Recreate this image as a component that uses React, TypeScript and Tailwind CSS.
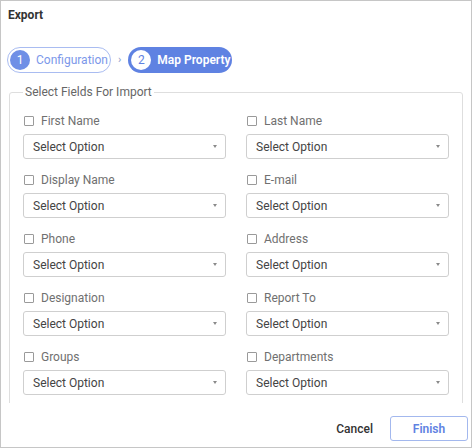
import { useState } from "react";

type Field = { key: string; label: string };

const FIELDS: Field[] = [
  { key: "firstName", label: "First Name" },
  { key: "lastName", label: "Last Name" },
  { key: "displayName", label: "Display Name" },
  { key: "email", label: "E-mail" },
  { key: "phone", label: "Phone" },
  { key: "address", label: "Address" },
  { key: "designation", label: "Designation" },
  { key: "reportTo", label: "Report To" },
  { key: "groups", label: "Groups" },
  { key: "departments", label: "Departments" },
];

function FieldRow({ field, checked, onToggle }: { field: Field; checked: boolean; onToggle: () => void }) {
  return (
    <div className="flex flex-col">
      <label className="flex items-center h-[16px] pl-[1px] cursor-pointer" onClick={onToggle}>
        <span
          className={
            "w-[10px] h-[10px] border rounded-[1px] " +
            (checked ? "border-[#5f82e2] bg-[#5f82e2]" : "border-[#9a9a9a] bg-white")
          }
        />
        <span className="ml-[7px] text-[12px] text-[#707070]">{field.label}</span>
      </label>
      <button
        type="button"
        className="mt-[5px] h-[25px] w-full flex items-center justify-between rounded-[3px] border border-[#cfcfcf] bg-white pl-[9px] pr-[8px] text-left"
      >
        <span className="text-[12px] font-normal text-[#444]">Select Option</span>
        <span className="w-0 h-0 border-l-[2.5px] border-r-[2.5px] border-t-[3px] border-l-transparent border-r-transparent border-t-[#8a8a8a]" />
      </button>
    </div>
  );
}

export default function App() {
  const [checked, setChecked] = useState<Record<string, boolean>>({});

  return (
    <div
      className="w-[472px] h-[448px] bg-white border border-[#c6c6c6] flex flex-col text-[12px]"
      style={{ fontFamily: "Roboto, 'Liberation Sans', sans-serif" }}
    >
      <div className="pl-[7px] pt-[6px] h-[16px] box-content leading-[16px] font-bold text-[12px] text-[#333]">Export</div>

      <div className="flex items-center mt-[24px] pl-[6px] h-[26px]">
        <div className="flex items-center h-[26px] w-[104px] rounded-full border border-[#a9bcf1] bg-white pl-[2px]">
          <span className="w-[20px] h-[20px] rounded-full bg-[#6f8fe6] text-white flex items-center justify-center text-[12px]">1</span>
          <span className="ml-[6px] text-[12px] text-[#7c98ea]">Configuration</span>
        </div>
        <span className="mx-[7px] text-[11px] text-[#8a9bc8]">›</span>
        <div className="flex items-center h-[26px] w-[104px] rounded-full bg-[#5f82e2] pl-[3px]">
          <span className="w-[20px] h-[20px] rounded-full bg-white text-[#5f82e2] flex items-center justify-center text-[12px]">2</span>
          <span className="ml-[6px] text-[12px] font-semibold text-white">Map Property</span>
        </div>
      </div>

      <div className="h-[330px] overflow-hidden px-[8px] pt-[12px]">
        <fieldset className="border border-[#dedede] rounded-[3px] px-[13px] pt-[14px] pb-[40px]">
          <legend className="px-[2px] text-[12px] leading-[14px] text-[#666]">Select Fields For Import</legend>
          <div className="grid grid-cols-2 gap-x-5 gap-y-[13px]">
            {FIELDS.map((f) => (
              <FieldRow
                key={f.key}
                field={f}
                checked={!!checked[f.key]}
                onToggle={() => setChecked((c) => ({ ...c, [f.key]: !c[f.key] }))}
              />
            ))}
          </div>
        </fieldset>
      </div>

      <div className="flex items-center justify-end pt-[13px] pr-[3px] gap-[15px]">
        <button type="button" className="text-[12px] font-medium text-[#333] px-[2px]">Cancel</button>
        <button
          type="button"
          className="w-[78px] h-[25px] rounded-[3px] border border-[#a3b8ee] text-[12px] font-semibold text-[#5f82e2]"
        >
          Finish
        </button>
      </div>
    </div>
  );
}
